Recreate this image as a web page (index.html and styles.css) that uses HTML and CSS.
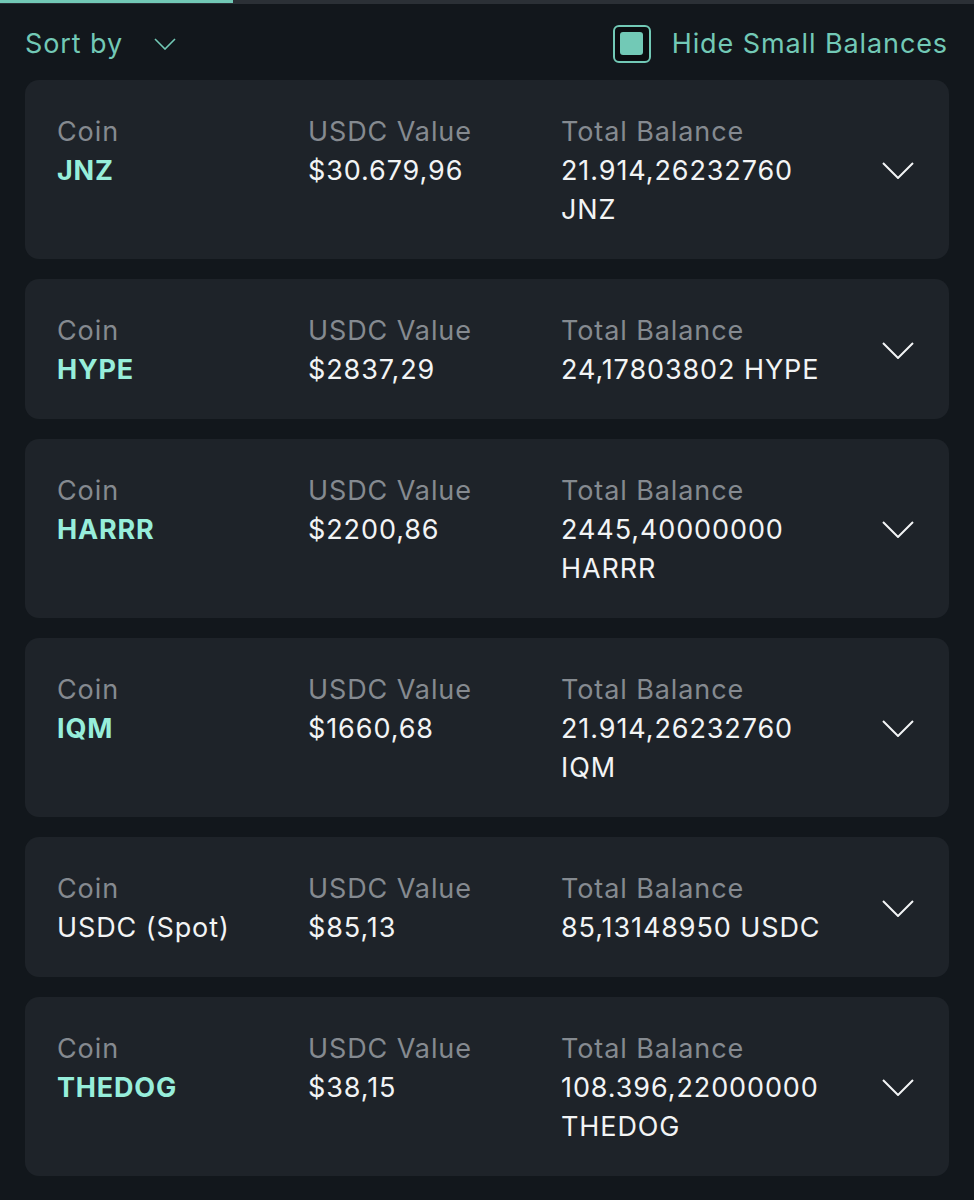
FILE: index.html
```html
<!DOCTYPE html>
<html>
  <head>
    <title>Balances</title>
    <link rel="stylesheet" href="styles.css">
  </head>
  <body>
    <div class="tabs-line"><div class="tab-active"></div></div>

    <div class="toolbar">
      <div class="sort">
        <span>Sort by</span>
        <svg class="sort-chevron" width="22" height="12" viewBox="0 0 22 12"><path d="M1 1 L11 11 L21 1" fill="none" stroke="currentColor" stroke-width="1.6"/></svg>
      </div>
      <label class="hide-small">
        <span class="checkbox"><span class="checkbox-fill"></span></span>
        <span>Hide Small Balances</span>
      </label>
    </div>

    <div class="list">
      <div class="card">
        <div class="col"><div class="label">Coin</div><div class="coin">JNZ</div></div>
        <div class="col"><div class="label">USDC Value</div><div class="value">$30.679,96</div></div>
        <div class="col"><div class="label">Total Balance</div><div class="value">21.914,26232760 JNZ</div></div>
        <svg class="chevron" width="32" height="17" viewBox="0 0 32 17"><path d="M1 1 L16 16 L31 1" fill="none" stroke="currentColor" stroke-width="2"/></svg>
      </div>

      <div class="card">
        <div class="col"><div class="label">Coin</div><div class="coin">HYPE</div></div>
        <div class="col"><div class="label">USDC Value</div><div class="value">$2837,29</div></div>
        <div class="col"><div class="label">Total Balance</div><div class="value">24,17803802 HYPE</div></div>
        <svg class="chevron" width="32" height="17" viewBox="0 0 32 17"><path d="M1 1 L16 16 L31 1" fill="none" stroke="currentColor" stroke-width="2"/></svg>
      </div>

      <div class="card">
        <div class="col"><div class="label">Coin</div><div class="coin">HARRR</div></div>
        <div class="col"><div class="label">USDC Value</div><div class="value">$2200,86</div></div>
        <div class="col"><div class="label">Total Balance</div><div class="value">2445,40000000 HARRR</div></div>
        <svg class="chevron" width="32" height="17" viewBox="0 0 32 17"><path d="M1 1 L16 16 L31 1" fill="none" stroke="currentColor" stroke-width="2"/></svg>
      </div>

      <div class="card">
        <div class="col"><div class="label">Coin</div><div class="coin">IQM</div></div>
        <div class="col"><div class="label">USDC Value</div><div class="value">$1660,68</div></div>
        <div class="col"><div class="label">Total Balance</div><div class="value">21.914,26232760 IQM</div></div>
        <svg class="chevron" width="32" height="17" viewBox="0 0 32 17"><path d="M1 1 L16 16 L31 1" fill="none" stroke="currentColor" stroke-width="2"/></svg>
      </div>

      <div class="card">
        <div class="col"><div class="label">Coin</div><div class="value">USDC (Spot)</div></div>
        <div class="col"><div class="label">USDC Value</div><div class="value">$85,13</div></div>
        <div class="col"><div class="label">Total Balance</div><div class="value">85,13148950 USDC</div></div>
        <svg class="chevron" width="32" height="17" viewBox="0 0 32 17"><path d="M1 1 L16 16 L31 1" fill="none" stroke="currentColor" stroke-width="2"/></svg>
      </div>

      <div class="card">
        <div class="col"><div class="label">Coin</div><div class="coin">THEDOG</div></div>
        <div class="col"><div class="label">USDC Value</div><div class="value">$38,15</div></div>
        <div class="col"><div class="label">Total Balance</div><div class="value">108.396,22000000 THEDOG</div></div>
        <svg class="chevron" width="32" height="17" viewBox="0 0 32 17"><path d="M1 1 L16 16 L31 1" fill="none" stroke="currentColor" stroke-width="2"/></svg>
      </div>
    </div>
  </body>
</html>
```

FILE: styles.css
```css
body {
  font-family: Inter, "Noto Sans", sans-serif;
  margin: 0;
  padding: 0;
  background-color: #12171c;
  color: #f2f4f5;
}

.tabs-line {
  height: 4px;
  background-color: #2b3036;
}

.tab-active {
  width: 233px;
  height: 3px;
  background-color: #72c9b6;
}

.toolbar {
  display: flex;
  justify-content: space-between;
  align-items: center;
  padding: 3px 26px 0 25px;
  height: 73px;
  color: #72c9b6;
  font-size: 27px;
  letter-spacing: 0.9px;
}

.sort {
  display: flex;
  align-items: center;
  gap: 31px;
}

.sort-chevron {
  margin-top: 1px;
}

.hide-small {
  display: flex;
  align-items: center;
  gap: 21px;
}

.checkbox {
  width: 34px;
  height: 34px;
  border: 2px solid #72c9b6;
  border-radius: 6px;
  background-color: #0b0e11;
  display: flex;
  align-items: center;
  justify-content: center;
}

.checkbox-fill {
  width: 23px;
  height: 23px;
  border-radius: 3px;
  background-color: #72c9b6;
}

.list {
  display: flex;
  flex-direction: column;
  gap: 20px;
  padding: 0 25px 20px 25px;
}

.card {
  display: grid;
  grid-template-columns: 251px 253px 280px 1fr;
  align-items: center;
  background-color: #1e2329;
  border-radius: 14px;
  padding: 32px 35px 30px 32px;
  font-size: 27px;
  line-height: 39px;
  letter-spacing: 0.9px;
}

.col {
  align-self: start;
}

.label {
  color: #858a90;
}

.coin {
  color: #97eedb;
  font-weight: 700;
  letter-spacing: 0.8px;
}

.value {
  color: #f2f4f5;
}

.chevron {
  justify-self: end;
  color: #f2f4f5;
}
```
